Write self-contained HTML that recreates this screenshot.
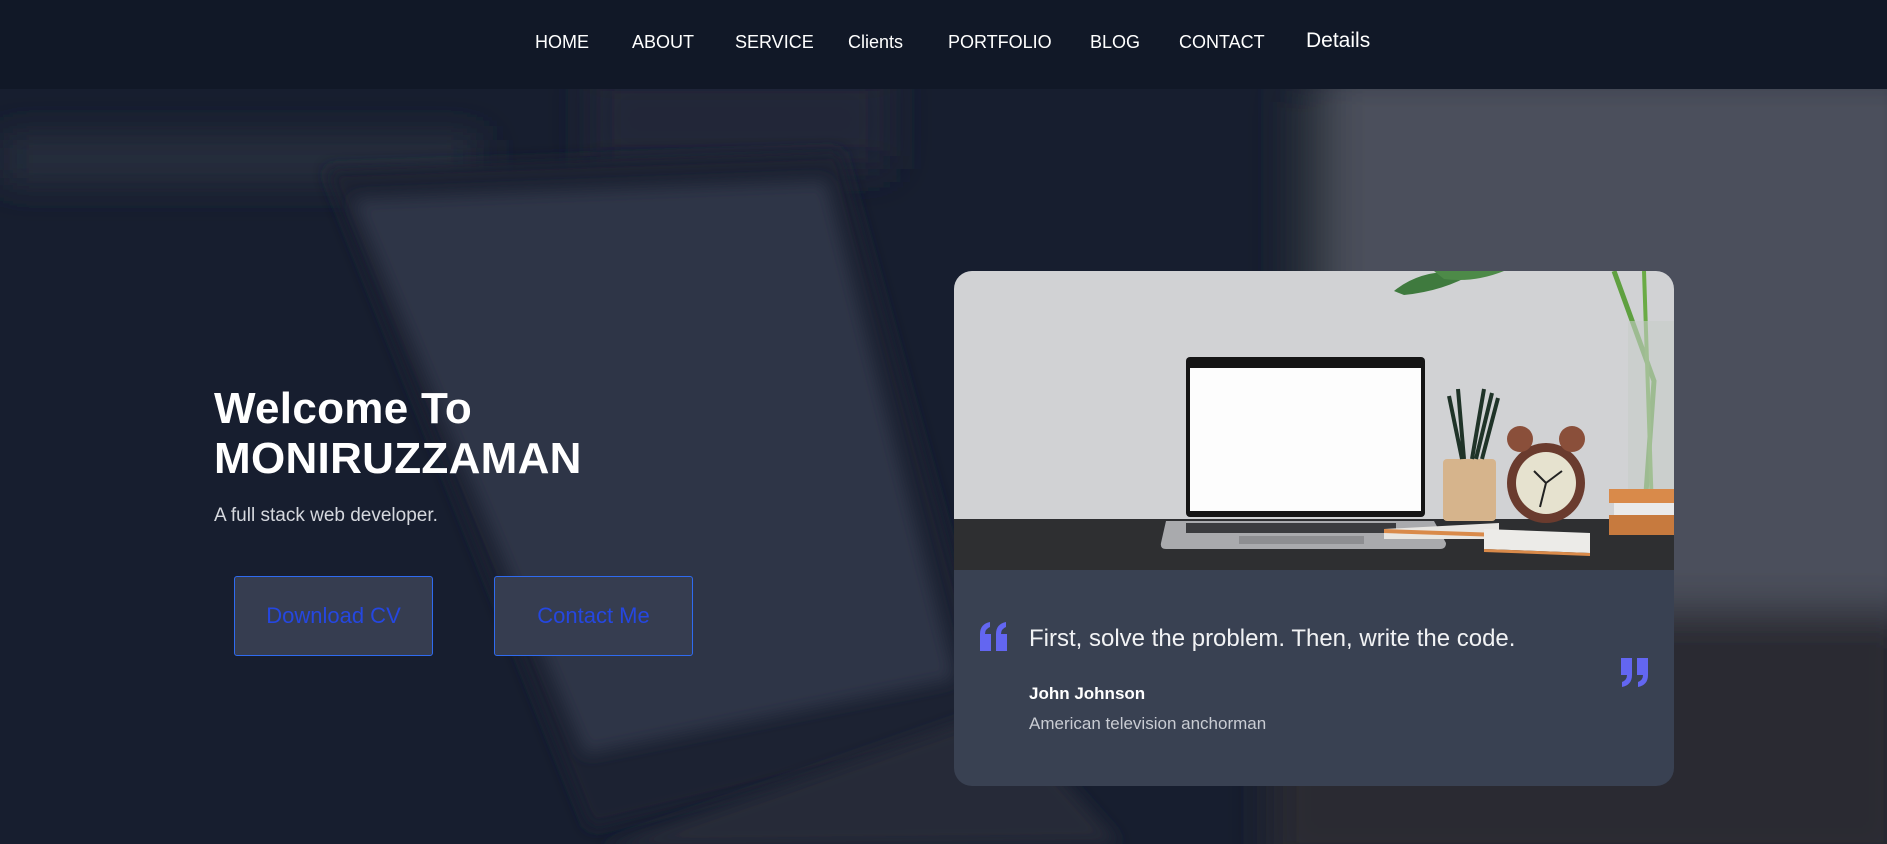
<!DOCTYPE html>
<html><head><meta charset="utf-8"><style>
*{margin:0;padding:0;box-sizing:border-box}
body{width:1887px;height:844px;overflow:hidden;background:#161d2e;font-family:"Liberation Sans",sans-serif;position:relative}
nav{position:absolute;left:0;top:0;width:1887px;height:89px;background:#111827;z-index:5}
nav span{position:absolute;top:32px;color:#fff;font-size:18px;white-space:nowrap}
.bg{position:absolute;left:0;top:89px;z-index:0}
.h1{position:absolute;left:214px;top:384px;color:#fff;font-weight:bold;font-size:44px;line-height:50px;z-index:2;letter-spacing:0.3px}
.sub{position:absolute;left:214px;top:505px;color:#d5d8de;font-size:19px;z-index:2}
.btn{position:absolute;top:576px;width:199px;height:80px;border:1px solid #2f6bf0;border-radius:3px;background:#363d50;color:#2547e0;font-size:22px;display:flex;align-items:center;justify-content:center;z-index:2}
.card{position:absolute;left:954px;top:271px;width:720px;height:515px;border-radius:18px;overflow:hidden;background:#394152;z-index:2}
.card div{position:absolute;white-space:nowrap}
</style></head><body>
<nav>
<span style="left:535px">HOME</span>
<span style="left:632px">ABOUT</span>
<span style="left:735px">SERVICE</span>
<span style="left:848px">Clients</span>
<span style="left:948px">PORTFOLIO</span>
<span style="left:1090px">BLOG</span>
<span style="left:1179px">CONTACT</span>
<span style="left:1306px;top:29px;font-size:21px">Details</span>
</nav>
<svg class="bg" width="1887" height="755" viewBox="0 0 1887 755">
<defs><filter id="b"><feGaussianBlur stdDeviation="20"/></filter><filter id="b2"><feGaussianBlur stdDeviation="8"/></filter></defs>
<rect width="1887" height="755" fill="#171e2f"/>
<g filter="url(#b)">
<rect x="1320" y="-20" width="600" height="560" fill="#4c505c"/>
<rect x="1290" y="0" width="40" height="755" fill="#2c303b"/>
<rect x="1270" y="520" width="640" height="260" fill="#2a2b32"/>
<rect x="590" y="-20" width="300" height="100" fill="#232837"/>
<rect x="0" y="50" width="480" height="40" fill="#293041"/>
</g>
<polygon points="325,80 840,62 1000,640 590,740" fill="#1b2131" filter="url(#b2)"/>
<polygon points="352,110 826,92 955,590 585,665" fill="#2d3546" filter="url(#b2)"/>
<polygon points="600,760 1000,620 1120,755" fill="#262b38" filter="url(#b2)"/>
</svg>
<div class="h1">Welcome To<br>MONIRUZZAMAN</div>
<div class="sub">A full stack web developer.</div>
<div class="btn" style="left:234px">Download CV</div>
<div class="btn" style="left:494px">Contact Me</div>
<div class="card">
<svg width="720" height="299" viewBox="0 0 720 299" style="display:block">
<rect width="720" height="299" fill="#d1d2d4"/>
<rect y="248" width="720" height="51" fill="#2e2f31"/>
<path d="M440 20 Q470 -5 520 2 Q490 20 450 24 Z" fill="#3f7a3e"/>
<path d="M480 0 L550 0 Q520 12 490 8Z" fill="#4d8a48"/>
<path d="M660 0 L700 110 L690 250" stroke="#5fa040" stroke-width="5" fill="none"/>
<path d="M690 0 L698 240" stroke="#6aab45" stroke-width="4" fill="none"/>
<rect x="674" y="50" width="46" height="170" fill="#c6cdc8" opacity=".6"/>
<rect x="232" y="86" width="239" height="160" rx="4" fill="#151515"/>
<rect x="236" y="97" width="231" height="143" fill="#fdfdfd"/>
<path d="M212 250 L480 250 L492 272 Q492 278 486 278 L212 278 Q206 278 207 272Z" fill="#a9aaad"/>
<rect x="232" y="252" width="210" height="10" fill="#3a3b3e"/>
<rect x="285" y="265" width="125" height="8" fill="#8d8e91"/>
<path d="M430 258 L545 252 L545 268 L430 268Z" fill="#e8e6e2"/>
<path d="M430 258 L545 262 L545 266 L430 262Z" fill="#d98a4a"/>
<path d="M530 258 L636 262 L636 282 L530 278Z" fill="#ecebe8"/>
<path d="M530 278 L636 282 L636 285 L530 281Z" fill="#d98a4a"/>
<rect x="489" y="188" width="53" height="62" rx="4" fill="#d6b48c"/>
<path d="M495 125 L508 188 M504 118 L510 188 M530 118 L518 188 M538 122 L522 188 M544 127 L528 188" stroke="#1f3328" stroke-width="4"/>
<ellipse cx="592" cy="212" rx="39" ry="40" fill="#6a3b2e"/>
<ellipse cx="592" cy="212" rx="30" ry="31" fill="#e6e2cf"/>
<circle cx="566" cy="168" r="13" fill="#8a4f3a"/>
<circle cx="618" cy="168" r="13" fill="#8a4f3a"/>
<path d="M592 212 L580 200 M592 212 L608 200 M592 212 L586 236" stroke="#222" stroke-width="2"/>
<rect x="655" y="218" width="65" height="14" fill="#d98a4a"/>
<rect x="660" y="232" width="60" height="12" fill="#eaeaea"/>
<rect x="655" y="244" width="65" height="20" fill="#c77a3e"/>
</svg>
<svg style="position:absolute;left:24px;top:351px" width="32" height="30" viewBox="0 0 32 30">
<path d="M2 12 Q2 2 12 0 L12 5 Q7 7 7 12 L13 12 L13 29 L2 29Z M18 12 Q18 2 28 0 L28 5 Q23 7 23 12 L29 12 L29 29 L18 29Z" fill="#6366f1"/>
</svg>
<svg style="position:absolute;left:665px;top:387px" width="32" height="30" viewBox="0 0 32 30">
<path d="M2 0 L13 0 L13 17 Q13 27 3 29 L3 24 Q8 22 8 17 L2 17Z M18 0 L29 0 L29 17 Q29 27 19 29 L19 24 Q24 22 24 17 L18 17Z" fill="#6366f1"/>
</svg>
<div style="left:75px;top:354px;color:#f1f2f4;font-size:24px">First, solve the problem. Then, write the code.</div>
<div style="left:75px;top:413px;color:#fff;font-size:17px;font-weight:bold">John Johnson</div>
<div style="left:75px;top:443px;color:#c9ccd3;font-size:17px">American television anchorman</div>
</div>
</body></html>
